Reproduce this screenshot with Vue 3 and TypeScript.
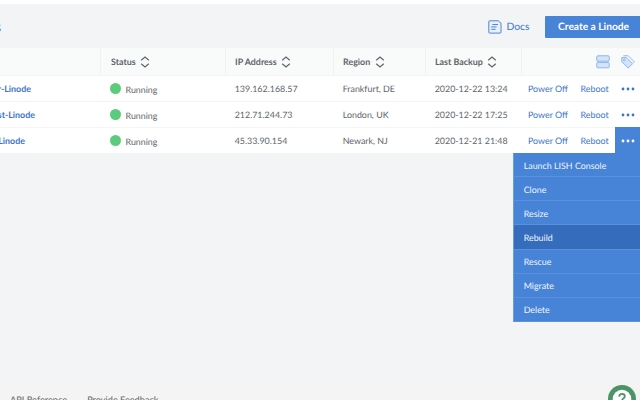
<script setup lang="ts">
interface Linode {
  name: string
  nameEnd: number
  ip: string
  region: string
  backup: string
  open: boolean
}

const columns: string[] = ['Status', 'IP Address', 'Region', 'Last Backup']

const linodes: Linode[] = [
  { name: 'r-Linode', nameEnd: 31, ip: '139.162.168.57', region: 'Frankfurt, DE', backup: '2020-12-22 13:24', open: false },
  { name: 'st-Linode', nameEnd: 35, ip: '212.71.244.73', region: 'London, UK', backup: '2020-12-22 17:25', open: false },
  { name: 'Linode', nameEnd: 25, ip: '45.33.90.154', region: 'Newark, NJ', backup: '2020-12-21 21:48', open: true },
]

const actions: string[] = ['Launch LISH Console', 'Clone', 'Resize', 'Rebuild', 'Rescue', 'Migrate', 'Delete']
const highlighted = 'Rebuild'
</script>

<template>
  <div class="page">
    <main class="main">
      <header class="toolbar">
        <h1 class="title"><span>s</span></h1>
        <a class="docs">
          <svg class="docs-icon" width="14" height="14" viewBox="0 0 14 14">
            <path d="M1.6 .8H10.2L13 3.2V12.2Q13 13.1 12.1 13.1H1.6Q.8 13.1 .8 12.2V1.7Q.8 .8 1.6 .8Z" />
            <path d="M4.4 4.5H10M3.2 6.9H8.6M3.2 9.3H7.6" />
          </svg>
          <span>Docs</span>
        </a>
        <button class="create">Create a Linode</button>
      </header>

      <section class="table">
        <div class="row head">
          <div class="cell"></div>
          <div v-for="column in columns" :key="column" class="cell">
            <span>{{ column }}</span>
            <svg class="sort" width="10" height="12" viewBox="0 0 10 12">
              <path d="M1.2 4.2L5 1L8.8 4.2M1.2 7.8L5 11L8.8 7.8" />
            </svg>
          </div>
          <div class="cell views">
            <svg width="14" height="14" viewBox="0 0 14 14">
              <rect x=".8" y=".8" width="12.4" height="5.4" rx=".8" />
              <rect x=".8" y="7.4" width="12.4" height="5.4" rx=".8" />
            </svg>
            <svg width="14" height="14" viewBox="0 0 14 14">
              <path class="outline" d="M2.4 .8H7.2L13.2 6.8L12.4 8" />
              <path d="M.8 2.6H5.3L11.6 8.7L7.2 13L.8 6.7Z" />
              <circle class="hole" cx="3.4" cy="5" r=".9" />
            </svg>
          </div>
        </div>

        <div v-for="linode in linodes" :key="linode.ip" class="row">
          <div class="cell name">
            <span class="name-text" :style="{ width: linode.nameEnd + 'px' }"><b>{{ linode.name }}</b></span>
          </div>
          <div class="cell status"><i class="dot"></i><span>Running</span></div>
          <div class="cell">{{ linode.ip }}</div>
          <div class="cell">{{ linode.region }}</div>
          <div class="cell">{{ linode.backup }}</div>
          <div class="cell actions">
            <a class="power">Power Off</a>
            <a class="reboot">Reboot</a>
            <button class="more" :class="{ open: linode.open }">
              <svg width="14" height="4" viewBox="0 0 14 4">
                <circle cx="2" cy="2" r="1.4" />
                <circle cx="7" cy="2" r="1.4" />
                <circle cx="12" cy="2" r="1.4" />
              </svg>
            </button>
            <ul v-if="linode.open" class="menu">
              <li v-for="action in actions" :key="action" :class="{ active: action === highlighted }">{{ action }}</li>
            </ul>
          </div>
        </div>
      </section>
    </main>

    <footer class="footer">
      <a>API Reference</a>
      <a>Provide Feedback</a>
    </footer>

    <div class="help">
      <svg width="28" height="28" viewBox="0 0 28 28">
        <circle cx="14" cy="14" r="14" fill="#4a9567" />
        <circle cx="14" cy="14" r="9.3" fill="#fff" />
        <path d="M11.2 11.6Q11.3 8.9 14 8.9Q16.8 8.9 16.8 11.3Q16.8 12.6 15.3 13.5Q14 14.4 14 16" fill="none" stroke="#4a9567" stroke-width="1.8" />
        <circle cx="14" cy="18.9" r="1.1" fill="#4a9567" />
      </svg>
    </div>
  </div>
</template>

<style>
body {
  background: #fff;
  overflow: hidden;
}
</style>

<style scoped>
.page {
  position: relative;
  box-sizing: border-box;
  width: 640px;
  height: 400px;
  padding-top: 4px;
  overflow: hidden;
  display: flex;
  flex-direction: column;
  font-family: Lato, 'Open Sans', sans-serif;
  font-size: 8.9px;
  line-height: 14px;
  color: #606469;
  text-rendering: geometricPrecision;
}
.main {
  height: 377px;
  flex: none;
  background: #f3f4f6;
}
.toolbar {
  height: 44px;
  display: flex;
  align-items: center;
}
.title {
  width: 1px;
  margin: 0;
  padding-top: 2px;
  display: flex;
  justify-content: flex-end;
  font-size: 15px;
  line-height: 20px;
  font-weight: 400;
  color: #32363c;
}
.docs {
  margin-left: auto;
  display: flex;
  align-items: center;
  gap: 5px;
  font-size: 10.3px;
  color: #3c75cc;
  padding-top: 2px;
}
.docs-icon {
  fill: #e9f0fb;
  stroke: #4c87d9;
  stroke-width: 1;
}
.create {
  box-sizing: border-box;
  width: 98px;
  height: 22px;
  margin: 1px -2.5px 0 15px;
  padding: 1px 0 0;
  border: 0;
  border-radius: 1px;
  background: #4783d6;
  color: #fff;
  font-family: inherit;
  font-size: 10.2px;
  font-weight: 700;
  line-height: 21px;
  text-rendering: inherit;
}
.row {
  box-sizing: border-box;
  height: 26px;
  display: grid;
  grid-template-columns: 100px 125px 108px 92px 96px 119px;
  background: #fff;
  border-top: 1px solid #f3f4f5;
}
.head {
  height: 27px;
  border-top: 0;
  background: #f9fafa;
  font-weight: 700;
}
.cell {
  box-sizing: border-box;
  min-width: 0;
  padding-left: 9.7px;
  display: flex;
  align-items: center;
  white-space: nowrap;
}
.head .cell {
  gap: 4.5px;
  padding-top: 1px;
}
.head .cell + .cell {
  border-left: 1px solid #f1f2f3;
  padding-left: 9px;
}
.head .cell:nth-child(2) {
  padding-left: 10px;
}
.sort {
  fill: none;
  stroke: #606469;
  stroke-width: 1.2;
}
.head .views {
  justify-content: flex-end;
  gap: 11px;
  padding-right: 5px;
  padding-top: 0;
}
.views svg {
  fill: #d4e4fb;
  stroke: #8fb4ec;
  stroke-width: 1;
}
.views .outline {
  fill: none;
}
.views .hole {
  fill: #fff;
}
.name {
  padding-left: 0;
}
.name-text {
  display: flex;
  justify-content: flex-end;
  color: #3c75cc;
}
.status {
  padding-left: 10px;
  gap: 4.5px;
}
.status span {
  padding-top: 2px;
}
.dot {
  width: 11px;
  height: 11px;
  border-radius: 50%;
  background: #5bcb7c;
}
.actions {
  position: relative;
  padding-left: 7px;
  color: #3c75cc;
}
.power {
  width: 52.5px;
}
.more {
  width: 25px;
  height: 26px;
  margin: -1px 0 0 auto;
  padding: 2px 0 0;
  border: 0;
  display: flex;
  align-items: center;
  justify-content: center;
  background: transparent;
  fill: #3c75cc;
}
.more.open {
  background: #4783d6;
  fill: #fff;
}
.menu {
  position: absolute;
  z-index: 2;
  top: 25px;
  right: 0;
  box-sizing: border-box;
  width: 127px;
  height: 169px;
  margin: 0;
  padding: 0;
  display: flex;
  flex-direction: column;
  list-style: none;
  background: #4783d6;
  border-left: 1px solid #6b9ce0;
  color: #f0f5fc;
}
.menu li {
  flex: 1;
  box-sizing: border-box;
  display: flex;
  align-items: center;
  padding: 2px 0 0 9.7px;
  border-bottom: 1px solid #5a91dc;
}
.menu li.active {
  background: #356cbb;
}
.footer {
  flex: 1;
  display: flex;
  align-items: flex-start;
  gap: 20px;
  padding: 12px 0 0 10px;
  background: #f4f4f4;
  font-size: 9.2px;
}
.help {
  position: absolute;
  left: 608px;
  top: 385px;
}
</style>
